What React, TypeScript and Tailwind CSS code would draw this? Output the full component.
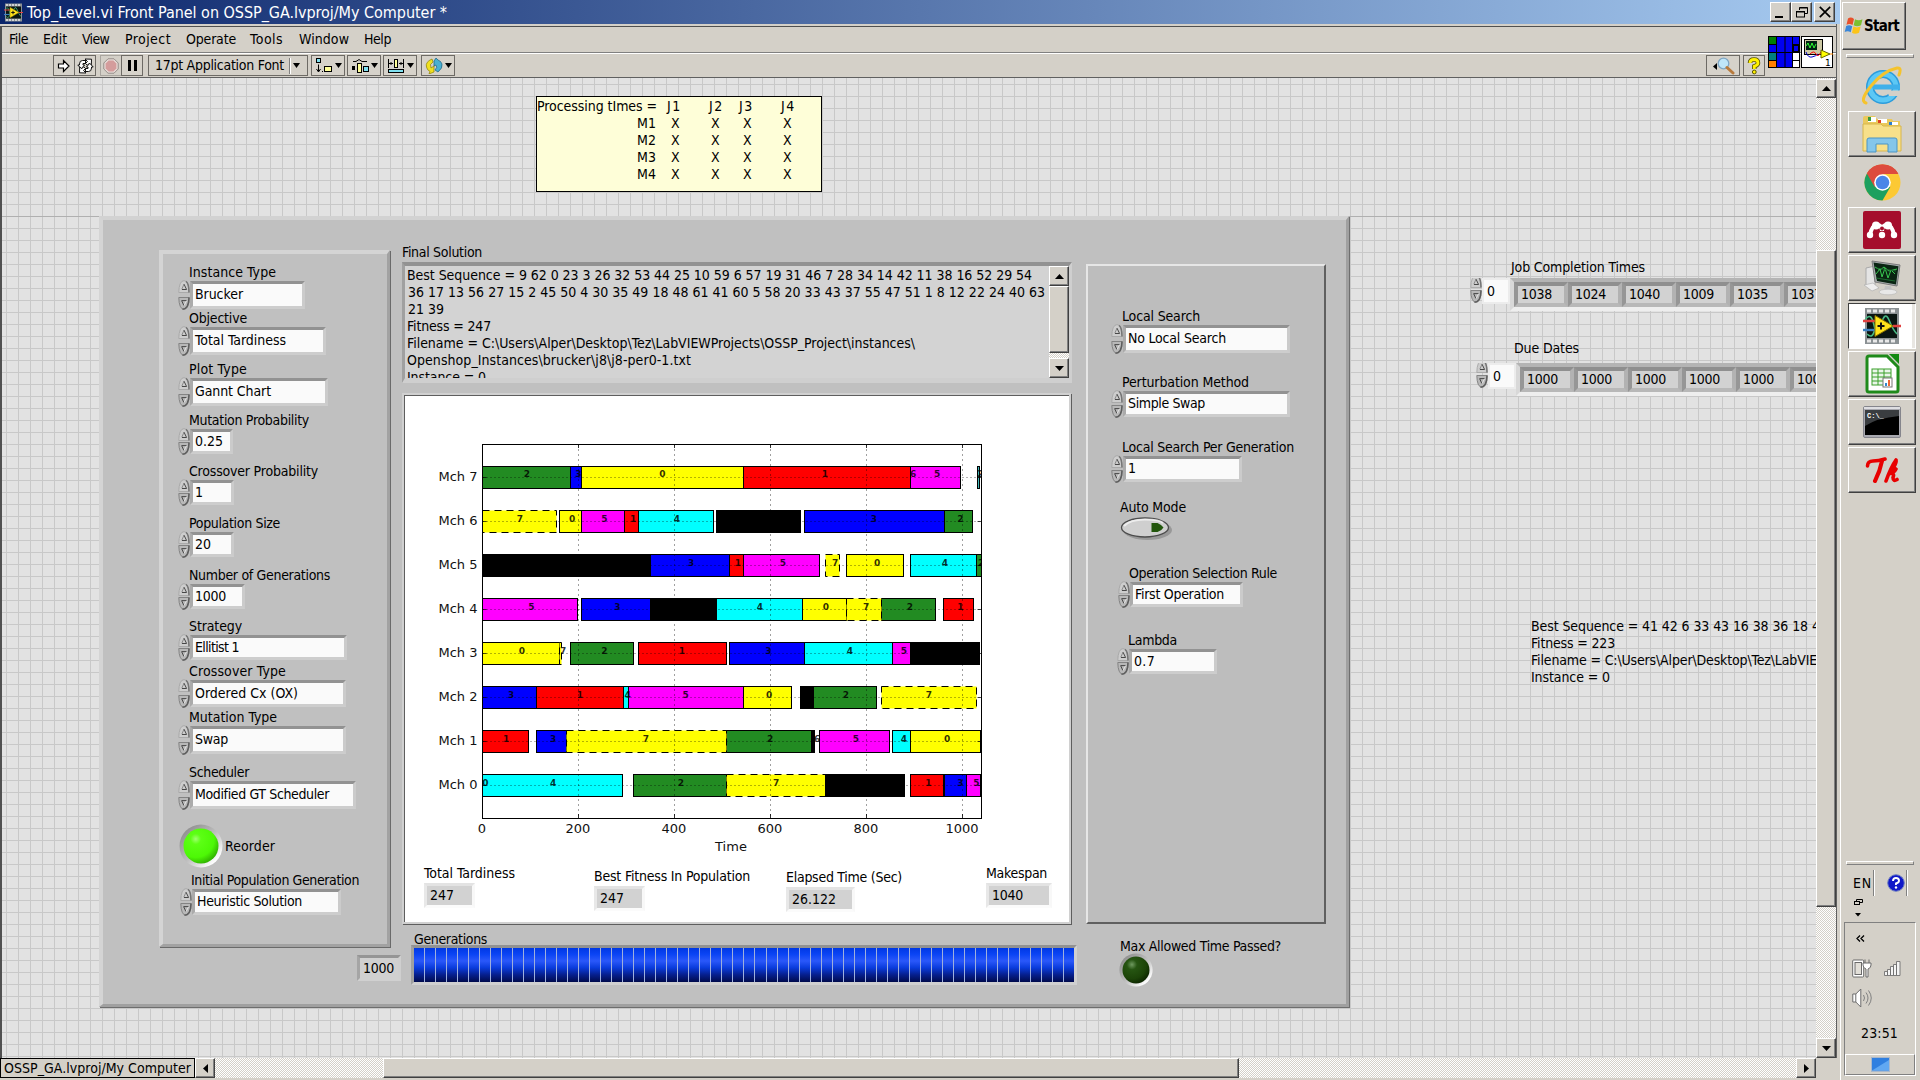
import React, { useLayoutEffect, useRef } from "react";

/* Text whose tracking is adjusted so that the run is exactly `w` pixels wide. */
function T({ w, children, className = "" }: { w?: number; children: string; className?: string }) {
  const ref = useRef<HTMLSpanElement>(null);
  useLayoutEffect(() => {
    const el = ref.current;
    if (!el || !w) return;
    el.style.letterSpacing = "0px";
    const natural = el.getBoundingClientRect().width;
    el.style.letterSpacing = `${(w - natural) / children.length}px`;
  }, [w, children]);
  return (
    <span ref={ref} className={`inline-block shrink-0 whitespace-pre ${className}`}>
      {children}
    </span>
  );
}

const RAISED = "border border-t-white border-l-white border-r-[#404040] border-b-[#404040] shadow-[inset_-1px_-1px_0_#808080] bg-[#d4d0c8]";
const DITHER = "bg-[conic-gradient(#ffffff_25%,#d4d0c8_0_50%,#ffffff_0_75%,#d4d0c8_0)] bg-[length:2px_2px]";

function Arrow({ dir }: { dir: "up" | "down" | "left" | "right" }) {
  const pts = {
    up: "0,5 4.5,0 9,5",
    down: "0,0 4.5,5 9,0",
    left: "5,0 0,4.5 5,9",
    right: "0,0 5,4.5 0,9",
  }[dir];
  const v = dir === "up" || dir === "down";
  return (
    <svg width={v ? 9 : 5} height={v ? 5 : 9} className="shrink-0">
      <polygon points={pts} fill="#000" />
    </svg>
  );
}

function ScrollButton({ dir, className = "" }: { dir: "up" | "down" | "left" | "right"; className?: string }) {
  return (
    <div className={`flex shrink-0 items-center justify-center ${RAISED} ${className}`}>
      <Arrow dir={dir} />
    </div>
  );
}

function Spinner({ tight = false }: { tight?: boolean }) {
  return (
    <div className={`flex w-[12px] shrink-0 flex-col justify-between ${tight ? "" : "-my-px"}`}>
      <svg width="12" height="13" viewBox="0 0 12 13">
        <path d="M.8 12.500 Q1 1 6 .6 Q11 1 11.200 12.500Z" fill="#cdcdcd" stroke="#a2a2a2" strokeWidth=".8" />
        <path d="M11 12.500 Q10.800 3 8 1.400" fill="none" stroke="#757575" strokeWidth="1.500" />
        <path d="M3.800 9.200 L6 4.200" stroke="#8a8a8a" fill="none" />
        <path d="M6 4.200 L8.600 9.500 H4" stroke="#484848" fill="none" />
      </svg>
      <svg width="12" height="13" viewBox="0 0 12 13">
        <path d="M.8 .5 Q1 12 6 12.400 Q11 12 11.200 .5Z" fill="#b8b8b8" stroke="#7d7d7d" strokeWidth=".9" />
        <path d="M11 .5 Q10.800 12 4.500 12.200" fill="none" stroke="#5d5d5d" strokeWidth="1.500" />
        <path d="M3.400 3.600 H8.400 M3.800 4 L6 8.800" stroke="#484848" fill="none" />
        <path d="M6 8.800 L8.400 4" stroke="#e4e4e4" fill="none" />
      </svg>
    </div>
  );
}

type Ctl = { label: string; lw: number; value: string; vw: number; cls: string; size: string };

function Control({ label, lw, value, vw, cls, size }: Ctl) {
  return (
    <div className={cls}>
      <div className="ml-[11px] h-[18px] leading-[18px]">
        <T w={lw}>{label}</T>
      </div>
      <div className="flex">
        <Spinner />
        <div className={`box-content flex items-center border-[3px] border-t-[#929292] border-r-[#cbcbcb] border-b-[#cdcdcd] border-l-[#ababab] bg-[#fafafa] pb-px ${size}`}>
          <T w={vw} className="ml-[2px] leading-[17px]">{value}</T>
        </div>
      </div>
    </div>
  );
}

const LEFT_CONTROLS: Ctl[] = [
  { label: "Instance Type", lw: 87, value: "Brucker", vw: 48, cls: "mt-[9px]", size: "w-[109px] h-[21px]" },
  { label: "Objective", lw: 58, value: "Total Tardiness", vw: 91, cls: "", size: "w-[130px] h-[21px]" },
  { label: "Plot Type", lw: 58, value: "Gannt Chart", vw: 76, cls: "mt-[5px]", size: "w-[132px] h-[21px]" },
  { label: "Mutation Probability", lw: 120, value: "0.25", vw: 28, cls: "mt-[5px]", size: "w-[37px] h-[18px]" },
  { label: "Crossover Probability", lw: 129, value: "1", vw: 8, cls: "mt-[8px]", size: "w-[38px] h-[18px]" },
  { label: "Population Size", lw: 91, value: "20", vw: 16, cls: "mt-[9px]", size: "w-[38px] h-[18px]" },
  { label: "Number of Generations", lw: 141, value: "1000", vw: 31, cls: "mt-[9px]", size: "w-[49px] h-[18px]" },
  { label: "Strategy", lw: 53, value: "Ellitist 1", vw: 44, cls: "mt-[8px]", size: "w-[151px] h-[18px]" },
  { label: "Crossover Type", lw: 97, value: "Ordered Cx (OX)", vw: 103, cls: "mt-[2px]", size: "w-[150px] h-[20px]" },
  { label: "Mutation Type", lw: 88, value: "Swap", vw: 33, cls: "mt-px", size: "w-[150px] h-[21px]" },
  { label: "Scheduler", lw: 60, value: "Modified GT Scheduler", vw: 134, cls: "mt-[9px]", size: "w-[160px] h-[21px]" },
];

const RIGHT_CONTROLS: Ctl[] = [
  { label: "Local Search", lw: 78, value: "No Local Search", vw: 98, cls: "mt-[41px]", size: "w-[161px] h-[21px]" },
  { label: "Perturbation Method", lw: 127, value: "Simple Swap", vw: 77, cls: "mt-[20px]", size: "w-[161px] h-[19px]" },
  { label: "Local Search Per Generation", lw: 172, value: "1", vw: 8, cls: "mt-[21px]", size: "w-[113px] h-[19px]" },
];

const COLORS: Record<string, string> = {
  g: "#228b22", b: "#0000ff", y: "#ffff00", r: "#ff0000", m: "#ff00ff", c: "#00ffff", k: "#000000", t: "#40b8b8", d: "#ffff00",
};

/* [colour, start, end, text, text centre]; "d" is drawn with a dashed outline */
type Bar = [string, number, number, string?, number?];
const ROWS: Bar[][] = [
  [["c", 0, 291.7, "4", 147], ["g", 314, 508.7, "2", 413.5], ["d", 508.7, 715, "7", 611.5], ["k", 715, 879.5], ["r", 891, 961, "1", 929], ["b", 962, 1008, "3", 995.5], ["m", 1008, 1038, "5", 1029], ["", 0, 0, "0", 6]],
  [["r", 0, 96, "1", 49], ["b", 112, 174.6, "3", 147], ["g", 508.7, 685.8, "2", 599], ["d", 174.6, 508.7, "7", 340.6], ["k", 688.5, 692, "6", 697], ["m", 701.7, 848, "5", 778], ["c", 854, 891, "4", 878], ["y", 891, 1038, "0", 968]],
  [["b", 0, 112, "3", 59.4], ["r", 112, 293.4, "1", 203], ["m", 304, 543, "5", 423], ["c", 293.4, 304, "4", 302.4], ["y", 543, 644, "0", 597], ["k", 662, 689], ["g", 689, 821, "2", 757], ["d", 831, 1029.5, "7", 930]],
  [["y", 0, 160, "0", 82], ["d", 160, 165, "7", 168], ["g", 183, 315, "2", 254], ["r", 325, 508.7, "1", 415.6], ["b", 514, 670.5, "3", 595.5], ["c", 670.5, 854, "4", 765.6], ["m", 854, 891, "5", 878], ["k", 891, 1036]],
  [["m", 0, 198.6, "5", 101.7], ["b", 205.6, 349.7, "3", 281], ["k", 350, 487], ["c", 488, 667, "4", 578], ["y", 667, 758, "0", 715.6], ["g", 831, 944, "2", 890.6], ["d", 758, 831, "7", 799], ["r", 960, 1023, "1", 995.5]],
  [["k", 0, 350], ["b", 350, 514.6, "3", 434.4], ["r", 514.6, 543, "1", 532.3], ["m", 543, 702.4, "5", 626], ["d", 714, 744, "7", 734.4], ["y", 758, 877.4, "0", 822], ["c", 891, 1030, "4", 963.5], ["g", 1030, 1044, "2", 1039]],
  [["d", 0, 154.5, "7", 78], ["y", 160, 206.6, "0", 186.5], ["m", 206.6, 296.5, "5", 254], ["r", 296.5, 325, "1", 314], ["c", 325, 482, "4", 405], ["k", 486.5, 662.5], ["b", 670.5, 962, "3", 815.6], ["g", 962, 1021, "2", 995.5]],
  [["g", 0, 183, "2", 92.7], ["b", 183, 206.6, "3", 200], ["y", 206.6, 543.4, "0", 374.7], ["r", 543.4, 891.3, "1", 713.5], ["m", 891.3, 995.5, "5", 947], ["t", 1030.500, 1035.8, "2", 1037], ["", 0, 0, "6", 897]],
];

const X0 = 77.5;
const px = (t: number) => X0 + t * 0.48;
const snap = (t: number) => Math.round(px(t) - 0.5) + 0.5;
const rowY = (i: number) => 389.5 - i * 44;

function Gantt() {
  return (
    <svg width="664" height="468" className="shrink-0" fontFamily='"DejaVu Sans", sans-serif'>
      <clipPath id="axes">
        <rect x={X0 - 0.5} y="48" width="500" height="375" />
      </clipPath>
      <g clipPath="url(#axes)">
        {ROWS.map((row, i) =>
          row.map((b, j) =>
            b[0] ? (
              <rect
                key={`${i}-${j}`}
                x={snap(b[1])}
                y={rowY(i) - 11}
                width={Math.max(1, snap(b[2]) - snap(b[1]))}
                height="22"
                fill={COLORS[b[0]]}
                stroke="#000"
                strokeWidth="1"
                strokeDasharray={b[0] === "d" ? "7 5" : undefined}
              />
            ) : null
          )
        )}
        {[200, 400, 600, 800, 1000].map((t) => (
          <g key={t} stroke="#000">
            <line x1={px(t)} x2={px(t)} y1="48.5" y2="422" strokeDasharray="1 4" strokeOpacity=".75" />
            <path d={`M${px(t)} 48v4M${px(t)} 422v-4`} strokeOpacity=".8" />
          </g>
        ))}
        {ROWS.map((_, i) => (
          <g key={i} stroke="#000">
            <line x1={X0} x2="576.5" y1={rowY(i)} y2={rowY(i)} strokeDasharray="1 3" strokeOpacity=".6" />
            <path d={`M${X0} ${rowY(i)}h4M576.5 ${rowY(i)}h-4`} strokeOpacity=".7" />
          </g>
        ))}
        {ROWS.map((row, i) =>
          row.map((b, j) =>
            b[3] ? (
              <text key={`${i}-${j}`} x={px(b[4]!)} y={rowY(i) + (i === 7 ? -0.5 : 0.5)} textAnchor="middle" fontSize="9" fontWeight="bold" fillOpacity=".82">
                {b[3]}
              </text>
            ) : null
          )
        )}
      </g>
      <rect x={X0} y="48.5" width="499" height="374" fill="none" stroke="#000" />
      <g fontSize="13" fill="#111">
        {ROWS.map((_, i) => (
          <text key={i} x="72.5" y={rowY(i) + 3.5} textAnchor="end">{`Mch ${i}`}</text>
        ))}
        {[0, 200, 400, 600, 800, 1000].map((t) => (
          <text key={t} x={px(t) - 0.5} y="437" textAnchor="middle">{t}</text>
        ))}
        <text x="326" y="455" textAnchor="middle">Time</text>
      </g>
    </svg>
  );
}

function Readout({ label, lw, value, vw, cls, size }: Ctl) {
  return (
    <div className={cls}>
      <div className="h-[19px] leading-[18px]">
        <T w={lw}>{label}</T>
      </div>
      <div className={`box-content flex items-center border-[3px] border-t-[#e3e3e3] border-r-[#f8f8f8] border-b-[#fbfbfb] border-l-[#e8e8e8] bg-[#d2d2d2] pl-[3px] ${size}`}>
        <T w={vw} className="leading-[17px]">{value}</T>
      </div>
    </div>
  );
}

function Led({ on }: { on: boolean }) {
  const s = on ? 44 : 34;
  const id = on ? "ledOn" : "ledOff";
  return (
    <svg width={s} height={s} viewBox="0 0 44 44" className="shrink-0">
      <defs>
        <linearGradient id={`${id}r`} x1="0" y1="0" x2="1" y2="1">
          <stop offset=".1" stopColor="#8c8c8c" />
          <stop offset=".5" stopColor="#bdbdbd" />
          <stop offset=".85" stopColor="#ffffff" />
        </linearGradient>
        <radialGradient id={id} cx=".35" cy=".3" r=".75">
          {on ? (
            <>
              <stop offset="0" stopColor="#a0ff70" />
              <stop offset=".2" stopColor="#5cff14" />
              <stop offset=".7" stopColor="#4df806" />
              <stop offset="1" stopColor="#2fae00" />
            </>
          ) : (
            <>
              <stop offset="0" stopColor="#6f9a60" />
              <stop offset=".25" stopColor="#265512" />
              <stop offset=".7" stopColor="#1c4408" />
              <stop offset="1" stopColor="#0c2400" />
            </>
          )}
        </radialGradient>
      </defs>
      <circle cx="22" cy="22" r="21.5" fill={`url(#${id}r)`} />
      <circle cx="22" cy="22" r="17.5" fill={`url(#${id})`} />
    </svg>
  );
}

function ArrayControl({ cells, cls }: { cells: string[]; cls: string }) {
  return (
    <div className={`flex overflow-hidden ${cls}`}>
      <div className="flex h-[28px] -translate-y-[5px]">
        <Spinner tight />
      </div>
      <div className="mr-[2px] ml-[2px] h-[22px] w-[24px] shrink-0 bg-[#fafafa] pt-[3px] pl-[3px] shadow-[0_0_0_2px_#ececec]">
        <T w={8} className="leading-[17px]">0</T>
      </div>
      <div className="-mt-[2px] flex h-[33px] shrink-0 border-t-4 border-b-4 border-l-[4px] border-t-[#b4b4b4] border-b-[#eeeeee] border-l-[#d8d8d8]">
        {cells.map((c, i) => (
          <div key={i} className="box-border flex h-[25px] w-[54px] items-center border-[4px] border-t-[#8f8f8f] border-r-[#b2b2b2] border-b-[#b8b8b8] border-l-[#969696] bg-[#d2d2d2] pl-[3px]">
            <T w={31} className="leading-[17px]">{c}</T>
          </div>
        ))}
      </div>
    </div>
  );
}

const MENU: [string, number, string][] = [
  ["File", 19, ""], ["Edit", 24, "ml-[15px]"], ["View", 27, "ml-[15px]"], ["Project", 46, "ml-[16px]"],
  ["Operate", 50, "ml-[15px]"], ["Tools", 33, "ml-[14px]"], ["Window", 50, "ml-[16px]"], ["Help", 27, "ml-[15px]"],
];

const TOOL = "flex h-[21px] shrink-0 items-center justify-center border border-[#6d6a65] bg-[#d6d2ca]";

function ToolBar() {
  return (
    <div className="flex h-[23px] items-center pl-[51px]">
      <div className={`${TOOL} w-[22px]`}>
        <svg width="14" height="14" viewBox="0 0 14 14"><path d="M1.5 5h5V1.500L12 7l-5.500 5.500V9h-5z" fill="#fff" stroke="#000" strokeWidth="1.200" /></svg>
      </div>
      <div className={`${TOOL} -ml-px w-[22px]`}>
        <svg width="17" height="16" viewBox="0 0 17 16" fill="#fff" stroke="#111" strokeWidth="1">
          <path d="M6 5.500h3.500L8 4l1.500-1.500h-4Q2.500 2.500 2.500 6v1H.8l3.400 3.700L7.600 7H6z" />
          <path d="M8 1l6.500.2-.2 6-2-2-2 2L8.500 5.500l2-2z" />
          <path d="M11 10.500H7.500L9 12l-1.500 1.500h4q3 0 3-3.500V9h1.700l-3.400-3.700L9.400 9H11z" />
          <path d="M9 15l-6.500-.2.200-6 2 2 2-2 1.800 1.700-2 2z" />
        </svg>
      </div>
      <div className="ml-[4px] flex h-[21px] w-[22px] shrink-0 items-center justify-center border border-[#a9a59f]">
        <svg width="16" height="16" viewBox="0 0 16 16"><path d="M5 .8h6L15.200 5v6L11 15.200H5L.8 11V5z" fill="#e8dcd8" stroke="#948c88" /><path d="M5.600 2.500h4.800l3 3v5l-3 3H5.600l-3-3v-5z" fill="#d49c9c" /></svg>
      </div>
      <div className={`${TOOL} -ml-px w-[22px]`}>
        <svg width="9" height="11"><path d="M0 0h3v11H0zM6 0h3v11H6z" /></svg>
      </div>
      <div className="ml-[5px] flex h-[21px] w-[160px] shrink-0 items-center border border-[#6d6a65] pl-[6px]">
        <T w={129}>17pt Application Font</T>
        <div className="ml-[5px] h-[16px] w-[2px] border-l border-[#808080] bg-white" />
        <svg width="7" height="5" className="ml-[2px]"><path d="M0 0h7L3.500 5z" /></svg>
      </div>
      {[0, 1, 2, 3].map((i) => (
        <div key={i} className={`${TOOL} w-[34px] ${i === 0 ? "ml-[3px]" : i === 3 ? "ml-[4px]" : "ml-[2px]"}`}>
          <svg width="18" height="16" viewBox="0 0 18 16">
            {i === 0 && <g stroke="#000"><rect x="1.500" y=".5" width="4" height="4" fill="#7fe0f0" /><path d="M3.500 6.500v7M1.500 11l2 3 2-3M7 13.500h1" fill="none" /><rect x="9.500" y="8.500" width="7" height="5" fill="#ffff99" /></g>}
            {i === 1 && <g stroke="#000"><path d="M2 3.500h3l3-2 3 2h5" fill="none" /><rect x="1.500" y="8.500" width="2" height="3" fill="#000" /><rect x="6.500" y="5.500" width="4" height="9" fill="#ffff99" /><rect x="12.500" y="8.500" width="5" height="5" fill="#7fe0f0" /></g>}
            {i === 2 && <g stroke="#000"><path d="M1.500 1v9M16.500 1v9M2 5.500h4M12 5.500h4M4 4v3M14 4v3" fill="none" /><rect x="7.500" y="1.500" width="3" height="8" fill="#ffff99" /><rect x="1.500" y="11.500" width="15" height="3" fill="#7fe0f0" /></g>}
            {i === 3 && <g><path d="M7 1Q0 4 1.500 9 2 12 5 13.500L4 16l5-2V8L6 10Q4 6 8 4z" fill="#f0e020" stroke="#8a8000" strokeWidth=".7" /><path d="M11 0 9 3v5l2-1q2 2-1 5l3 2q5-4 4-8Q16 3 13 2z" fill="#4ab0d0" stroke="#155e80" strokeWidth=".7" /></g>}
          </svg>
          <svg width="7" height="5" className="ml-[2px]"><path d="M0 0h7L3.500 5z" /></svg>
        </div>
      ))}
      <div className={`${TOOL} ml-auto w-[34px]`}>
        <svg width="23" height="18" viewBox="0 0 23 18"><path d="M5 6v7L1 9.500z" /><circle cx="11.500" cy="6.500" r="5.300" fill="#bfe6fa" stroke="#7fa6c4" strokeWidth="1.300" /><path d="M15 10.500l6 5.500" stroke="#b87a3c" strokeWidth="3" strokeLinecap="round" /></svg>
      </div>
      <div className={`${TOOL} mr-[71px] ml-[3px] w-[22px]`}>
        <svg width="14" height="18" viewBox="0 0 14 18"><path d="M3 6Q3 2.500 7 2.500T11 6Q11 8 7.300 9.300V12" fill="none" stroke="#5a5500" strokeWidth="4.500" /><path d="M3 6Q3 2.500 7 2.500T11 6Q11 8 7.300 9.300V12" fill="none" stroke="#fff200" strokeWidth="2.800" /><circle cx="7.300" cy="15" r="1.900" fill="#fff200" stroke="#5a5500" /></svg>
      </div>
    </div>
  );
}

function ConnectorPane() {
  return (
    <svg width="66" height="33" viewBox="0 0 66 33">
      <rect width="32" height="32" fill="#000" />
      <g fill="#0000f0">
        <path d="M9 1h7.500v15H9zM17.500 1H24v15h-6.500zM9 17h7.500v14H9zM17.500 17H24v14h-6.500zM25 1h6v7h-6zM1 9h7v7H1z" />
        <path d="M26 10h4v5h-4z" />
      </g>
      <path d="M1 1h7v7H1z" fill="#008000" /><path d="M1 17h7v7H1z" fill="#008080" /><path d="M1 25h7v6H1z" fill="#ff8000" />
      <path d="M25 17h6v7h-6zM25 25h6v6h-6z" fill="#fff" />
      <rect x="33.500" y=".5" width="31" height="31" fill="#fff" stroke="#000" />
      <rect x="36.500" y="3.500" width="18" height="15" fill="#cdc9a5" stroke="#000" />
      <rect x="38" y="5" width="11" height="9" fill="#021" /><path d="M38 10l2-3 2 5 2-5 2 5 2-4" stroke="#3f3" fill="none" />
      <path d="M38 16q2 6 6 5t6-3" stroke="#00c" fill="none" /><path d="M42 18q4-4 6 0t5-2" stroke="#f00" fill="none" />
      <path d="M53 14l9 4-9 4z" fill="#ff0" stroke="#660" /><path d="M62 18h3" stroke="#f80" />
      <text x="57" y="29.500" fontSize="9" fontFamily='"DejaVu Sans", sans-serif'>1</text>
    </svg>
  );
}

function LvIcon({ size }: { size: number }) {
  return (
    <svg width={size} height={size} viewBox="0 0 38 36" className="shrink-0">
      <rect x="2" y="0" width="34" height="36" fill="#8b9194" />
      <g fill="#e8e8e8">{[4, 10, 16, 22, 28].map((x) => <path key={x} d={`M${x} 1.500h4v3h-4zM${x} 31.500h4v3h-4z`} />)}</g>
      <rect x="4" y="6" width="30" height="24" fill="#0a1512" />
      <path d="M2 12q6-9 9 5t7 0q4-15 8-5t8 14M4 26q6 6 8-6" stroke="#48b884" strokeWidth="1.600" fill="none" />
      <path d="M0 13h12M30 18h8" stroke="#e04040" strokeWidth="2.400" /><path d="M0 22h12" stroke="#3a7fc0" strokeWidth="2.400" />
      <path d="M12 7.500v21L30 18z" fill="#ffe21c" stroke="#8a7400" /><path d="M18 14.500v7M14.500 18h7" stroke="#111" strokeWidth="2" />
    </svg>
  );
}

function WinFlag({ size }: { size: number }) {
  return (
    <svg width={size} height={size} viewBox="0 0 20 20" className="shrink-0">
      <path d="M4 2.500Q7 .5 10 3L8.500 9Q5.500 7 2.500 8.800z" fill="#e8502a" />
      <path d="M11 3.300q3.500 2 7.500 0L17 9.300q-4 1.700-7.300 0z" fill="#7cc030" />
      <path d="M2.200 10q3-1.800 6 .2L6.700 16.300q-3-2-6-.2z" fill="#3a86d8" />
      <path d="M9.400 10.600q3.500 1.600 7.300 0L15 16.800q-4 1.700-7 0z" fill="#fcc419" />
    </svg>
  );
}

const TASK_ICONS: { framed: string; icon: React.ReactNode }[] = [
  {
    framed: "",
    icon: (
      <svg width="40" height="40" viewBox="0 0 40 40">
        <circle cx="21" cy="21" r="13" fill="none" stroke="#2b9cdc" strokeWidth="8" />
        <circle cx="21" cy="21" r="13" fill="none" stroke="#5cc8f5" strokeWidth="5" />
        <path d="M11 21h27" stroke="#3fb0ea" strokeWidth="5" /><path d="M25 24.500h15v5.500H27z" fill="#d4d0c8" />
        <path d="M4 37Q-3 35 9 20T35 2q5-1 2 7" fill="none" stroke="#f5c32c" strokeWidth="3" strokeLinecap="round" />
      </svg>
    ),
  },
  {
    framed: "up",
    icon: (
      <svg width="40" height="38" viewBox="0 0 40 38">
        <path d="M1 7V3q0-2 2-2h10l2 3h15l1 2h7v30H1z" fill="#eac95c" />
        <path d="M6 2h8v5H6z" fill="#fff" /><path d="M6 2h3v4H6z" fill="#3a9a3a" /><path d="M16 4h9v4h-9z" fill="#fff" /><path d="M16 5h3v3h-3z" fill="#e04020" /><path d="M27 7h9v3h-9z" fill="#fff" /><path d="M27 7h3v3h-3z" fill="#2a7fd0" />
        <path d="M1 9h18l2 2h18v25H1z" fill="#f7e08a" stroke="#d8b64a" />
        <path d="M5 37V25q0-2 2-2h26q2 0 2 2v12H26v-8H14v8z" fill="#84c6ea" stroke="#4a94c4" />
      </svg>
    ),
  },
  {
    framed: "",
    icon: (
      <svg width="37" height="37" viewBox="0 0 37 37">
        <circle cx="18.500" cy="18.500" r="18" fill="#fcc934" />
        <path d="M18.500 18.500L2.900 9.500A18 18 0 0 1 34.100 9.500H18.500z" fill="#dd4b3e" />
        <path d="M18.500 18.500L2.900 9.500A18 18 0 0 0 18.500 36.500l7.800-13.500z" fill="#1da05f" />
        <path d="M2.900 9.500l7.800 13.500L18.500 10h15.900A18 18 0 0 0 2.900 9.500z" fill="#dd4b3e" />
        <circle cx="18.500" cy="18.500" r="8.300" fill="#fff" /><circle cx="18.500" cy="18.500" r="6.800" fill="#4a86e8" />
      </svg>
    ),
  },
  {
    framed: "up",
    icon: (
      <svg width="38" height="38" viewBox="0 0 38 38">
        <rect width="38" height="38" rx="2" fill="#a50e2c" />
        <path d="M7 24q2-10 7-10t5 6q0-6 5-6t7 10" fill="none" stroke="#fff" strokeWidth="4" />
        <circle cx="7" cy="24" r="3.200" fill="#fff" /><circle cx="19" cy="24" r="3.200" fill="#fff" /><circle cx="31" cy="24" r="3.200" fill="#fff" /><circle cx="13" cy="14.500" r="4" fill="#fff" /><circle cx="25" cy="14.500" r="4" fill="#fff" />
        <circle cx="19" cy="17.500" r="2" fill="#a50e2c" />
      </svg>
    ),
  },
  {
    framed: "up",
    icon: (
      <svg width="38" height="36" viewBox="0 0 38 36">
        <path d="M3 8l9-2v22l-9-2z" fill="#e4e4e4" stroke="#aaa" /><path d="M1 25l9-2 6 5-7 3z" fill="#eee" stroke="#aaa" strokeWidth=".6" />
        <path d="M9 1l28 4-3 21-22-4z" fill="#a9adaf" stroke="#7a7a7a" /><path d="M10.500 2.500l25 3.700L33 24.500l-19-3.500z" fill="#0a2412" />
        <path d="M13 14l4-5 2 8 3-9 3 10 3-8 4 4M12 7l5 3 4-3 5 4 8-2" stroke="#38c850" fill="none" /><path d="M13 8l20 3M13 18l19 3" stroke="#1f6a30" />
        <path d="M22 26h6l1 5h-8z" fill="#c2c2c2" /><ellipse cx="25" cy="32" rx="9" ry="2.800" fill="#e8e8e8" stroke="#b5b5b5" strokeWidth=".6" />
      </svg>
    ),
  },
  { framed: "down", icon: <LvIcon size={38} /> },
  {
    framed: "up",
    icon: (
      <svg width="35" height="40" viewBox="0 0 35 40">
        <path d="M4 2h18l11 11v23q0 2-2 2H4q-2 0-2-2V4q0-2 2-2z" fill="#fff" stroke="#1f8a1a" strokeWidth="3" />
        <path d="M24 0h10v10z" fill="#128a10" />
        <rect x="7" y="15" width="19" height="16" fill="#eaf6ea" stroke="#3aa02a" /><path d="M7 19h19M7 23h19M7 27h19M13 15v16M19 15v16" stroke="#3aa02a" />
        <rect x="18" y="24" width="9" height="9" fill="#fff" stroke="#777" /><path d="M20 29h2v3h-2z" fill="#38c" /><path d="M23 26h2v6h-2z" fill="#e63" />
      </svg>
    ),
  },
  {
    framed: "up",
    icon: (
      <svg width="38" height="32" viewBox="0 0 38 32">
        <rect x=".5" y=".5" width="37" height="31" rx="1.500" fill="#a9a9b0" stroke="#85858c" /><path d="M1 1h36v2H1z" fill="#dedee2" />
        <rect x="2" y="4" width="34" height="25" fill="#000" /><path d="M2 4h34v6Q14 12 2 20z" fill="#3a3d40" />
        <text x="4" y="11.500" fontSize="7" fill="#fff" fontWeight="bold" fontFamily='"Liberation Mono", monospace'>C:\_</text>
      </svg>
    ),
  },
  {
    framed: "up",
    icon: (
      <svg width="34" height="26" viewBox="0 0 34 26" fill="none" stroke="#e80000" strokeLinecap="round" strokeLinejoin="round">
        <path d="M2.500 9Q2.500 4 8 4T20 2" strokeWidth="3.600" />
        <path d="M17 4Q15 14 10 24" strokeWidth="4" />
        <path d="M31 3Q26 10 21 24M31 3.500q1 3-5 10M31 12q-2 4-6 4.500 5-.5 3 4 0 4.500 4 2" strokeWidth="3.600" />
      </svg>
    ),
  },
];

function TaskBar() {
  return (
    <div className="flex w-[80px] shrink-0 flex-col border-l border-white bg-[#d4d0c8] pl-px">
      <div className={`mt-[2px] flex h-[48px] w-[64px] shrink-0 items-center pl-px ${RAISED}`}>
        <WinFlag size={20} />
        <T w={35} className="text-[15px] font-bold">Start</T>
      </div>
      <div className="mt-[4px] ml-[4px] h-[4px] w-[68px] shrink-0 border border-t-white border-r-[#808080] border-b-[#808080] border-l-white" />
      <div className="ml-[6px] flex flex-col gap-[2px] pt-[5px]">
        {TASK_ICONS.map((t, i) => (
          <div
            key={i}
            className={
              "flex h-[46px] w-[68px] shrink-0 items-center justify-center " +
              (t.framed === "up" ? RAISED : t.framed === "down" ? "border border-t-[#404040] border-r-white border-b-white border-l-[#404040] bg-white shadow-[inset_-3px_0_0_#e8e6e2]" : "")
            }
          >
            {t.icon}
          </div>
        ))}
      </div>
      <div className="mt-auto ml-[4px] h-[4px] w-[68px] shrink-0 border border-t-white border-r-[#808080] border-b-[#808080] border-l-white" />
      <div className="mt-[5px] flex h-[26px] items-center pl-[11px]">
        <T w={19}>EN</T>
        <div className="ml-px h-full w-[2px] border-l border-[#808080] bg-white" />
        <svg width="18" height="18" viewBox="0 0 18 18" className="ml-[12px]">
          <circle cx="9" cy="9" r="8.300" fill="#1018c8" stroke="#7080c0" />
          <path d="M6 7q0-3 3-3t3 2.700Q12 8.500 9 9.500V11" fill="none" stroke="#fff" strokeWidth="1.900" /><circle cx="9" cy="13.500" r="1.200" fill="#fff" />
        </svg>
        <div className="ml-px h-full w-[2px] border-l border-[#808080] bg-white" />
      </div>
      <div className="mt-[3px] ml-[12px] flex h-[22px] flex-col">
        <svg width="9" height="7" viewBox="0 0 9 7" fill="none" stroke="#000"><path d="M2.500 2V.5h6v3H6" /><rect x=".5" y="2.500" width="5" height="3" /></svg>
        <svg width="6" height="4" className="mt-[7px] ml-px"><path d="M0 0h6L3 3.500z" /></svg>
      </div>
      <div className="mt-px mb-[4px] ml-[2px] flex h-[154px] w-[72px] shrink-0 flex-col border border-t-[#808080] border-r-white border-b-white border-l-[#808080]">
        <svg width="9" height="7" viewBox="0 0 9 7" className="mt-[12px] ml-[11px]" fill="none" stroke="#000" strokeWidth="1.300"><path d="M4 .5l-3 3 3 3M8 .5l-3 3 3 3" /></svg>
        <div className="mt-[16px] ml-[7px] flex items-center gap-[12px]">
          <svg width="20" height="20" viewBox="0 0 20 20" fill="#fff" stroke="#6b6b6b"><rect x=".7" y="2" width="11" height="17" rx="1" /><rect x="3" y="4.500" width="6.500" height="12" fill="#e2dfd8" /><path d="M11 5h8v2q0 3-3 4v8h-2v-8q-3-1-3-4zM13 5V1.500M17 5V1.500" /></svg>
          <svg width="17" height="15" viewBox="0 0 17 15" fill="#f4f4f4" stroke="#707070" strokeWidth=".9"><path d="M.5 10.500h3v4h-3zM3.500 8.500h3v6h-3zM6.500 5.500h3v9h-3zM9.500 3.500h3v11h-3zM12.500.5h3.500v14h-3.500z" /></svg>
        </div>
        <svg width="21" height="20" viewBox="0 0 21 20" className="mt-[10px] ml-[7px]" fill="none" stroke="#808080"><path d="M.8 6h3l5-5v18l-5-5h-3zM3.800 6v8" fill="#fff" stroke="#6b6b6b" /><path d="M11.500 7q2 3 0 6M14 4.500q4 5.500 0 11M16.500 2.500q5.500 7.500 0 15" /></svg>
        <div className="mt-[17px] ml-[16px] h-[17px]"><T w={37}>23:51</T></div>
        <div className="mt-auto flex h-[21px] shrink-0 items-center justify-center border border-t-white border-r-[#808080] border-b-[#808080] border-l-white">
          <svg width="19" height="15" viewBox="0 0 19 15"><rect width="19" height="15" fill="#a8b8cc" /><rect x="1" y="1" width="17" height="12.500" fill="#2f7fe0" /><path d="M1 13.500L18 3v10.500z" fill="#61a8f2" /></svg>
        </div>
      </div>
    </div>
  );
}

function MatrixNote() {
  return (
    <div className="absolute top-[18px] left-[534px] h-[96px] w-[286px] border border-black bg-[#fefed8] leading-[17px]">
      <div className="mt-px grid grid-cols-[118px_42px_30px_42px_1fr]">
        <T w={117}>Processing tImes =</T>
        {["J1", "J2", "J3", "J4"].map((j) => (
          <div key={j} className="pl-[12px]"><T w={15}>{j}</T></div>
        ))}
        {["M1", "M2", "M3", "M4"].map((m) => (
          <React.Fragment key={m}>
            <div className="pl-[100px]"><T w={19}>{m}</T></div>
            {[0, 1, 2, 3].map((i) => (
              <div key={i} className={i === 0 ? "pl-[16px]" : i === 1 ? "pl-[14px]" : i === 2 ? "pl-[16px]" : "pl-[14px]"}><T w={9}>X</T></div>
            ))}
          </React.Fragment>
        ))}
      </div>
    </div>
  );
}

const SOLUTION: [string, number, string][] = [
  ["Best Sequence = 9 62 0 23 3 26 32 53 44 25 10 59 6 57 19 31 46 7 28 34 14 42 11 38 16 52 29 54", 625, ""],
  ["36 17 13 56 27 15 2 45 50 4 30 35 49 18 48 61 41 60 5 58 20 33 43 37 55 47 51 1 8 12 22 24 40 63", 637, "ml-px"],
  ["21 39", 36, "ml-px"],
  ["Fitness = 247", 84, ""],
  ["Filename = C:\\Users\\Alper\\Desktop\\Tez\\LabVIEWProjects\\OSSP_Project\\instances\\", 508, ""],
  ["Openshop_Instances\\brucker\\j8\\j8-per0-1.txt", 284, ""],
  ["Instance = 0", 79, ""],
];

function MainPanel() {
  return (
    <div className="absolute top-[138px] left-[97px] flex h-[791px] w-[1250px] border-t-[4px] border-r-[3px] border-b-[3px] border-l-[4px] border-t-[#d2d2d2] border-r-[#a0a0a0] border-b-[#a0a0a0] border-l-[#d4d4d4] bg-[#c0c0c0] shadow-[1px_1px_0_#6e6e6e]">
      <div className="ml-[56px] w-[242px] shrink-0 pt-[30px]">
        <div className="h-[697px] w-[231px] border-t-[4px] border-r-[3px] border-b-[3px] border-l-[4px] border-t-[#d4d4d4] border-r-[#a2a2a2] border-b-[#a2a2a2] border-l-[#d4d4d4] pl-[15px] shadow-[1px_1px_0_#6a6a6a]">
          {LEFT_CONTROLS.map((c) => <Control key={c.label} {...c} />)}
          <div className="mt-[15px] ml-px flex items-center gap-[2px]">
            <Led on />
            <T w={50}>Reorder</T>
          </div>
          <Control label="Initial Population Generation" lw={168} value="Heuristic Solution" vw={105} cls="mt-[3px] ml-[2px]" size="w-[143px] h-[19px]" />
        </div>
        <div className="mt-[8px] ml-[198px] flex h-[26px] w-[44px] items-center border-[3px] border-t-[#959595] border-r-[#cfcfcf] border-b-[#d0d0d0] border-l-[#a5a5a5] bg-[#d0d0d0] pt-px pl-[3px]">
          <T w={31}>1000</T>
        </div>
      </div>

      <div className="ml-px w-[675px] shrink-0 pt-[23px]">
        <div className="h-[19px] leading-[18px]"><T w={80}>Final Solution</T></div>
        <div className="flex h-[121px] w-[670px] border-[3px] border-t-[4px] border-b-[5px] border-t-[#929292] border-r-[#cfcfcf] border-b-[#cfcfcf] border-l-[#a0a0a0] bg-[#d3d3d3]">
          <div className="h-[112px] flex-1 overflow-hidden pt-px pl-[2px]">
            {SOLUTION.map(([s, w, c]) => (
              <div key={s} className="h-[17px] leading-[17px]"><T w={w} className={c}>{s}</T></div>
            ))}
          </div>
          <div className={`flex w-[20px] flex-col ${DITHER}`}>
            <ScrollButton dir="up" className="h-[20px]" />
            <div className={`h-[67px] ${RAISED}`} />
            <ScrollButton dir="down" className="mt-auto h-[20px]" />
          </div>
        </div>
        <div className="mt-[10px] flex h-[531px] w-[669px] flex-col border-2 border-[#d0d0d0] bg-white pt-px pl-px shadow-[inset_1px_1px_0_#5e5e5e,1px_1px_0_#5e5e5e]">
          <Gantt />
          <div className="flex">
            <Readout label="Total Tardiness" lw={91} value="247" vw={24} cls="ml-[19px] w-[170px]" size="w-[42px] h-[19px]" />
            <Readout label="Best Fitness In Population" lw={156} value="247" vw={24} cls="mt-[3px] w-[192px]" size="w-[42px] h-[19px]" />
            <Readout label="Elapsed Time (Sec)" lw={116} value="26.122" vw={44} cls="mt-[4px] w-[200px]" size="w-[60px] h-[19px]" />
            <Readout label="Makespan" lw={61} value="1040" vw={31} cls="w-[80px]" size="w-[57px] h-[19px]" />
          </div>
        </div>
        <div className="mt-[6px] ml-[12px] h-[15px] leading-[18px]"><T w={73}>Generations</T></div>
        <div className="ml-[9px] flex h-[40px] w-[666px] gap-px border-[3px] border-t-[#929292] border-r-[#d0d0d0] border-b-[#d0d0d0] border-l-[#a0a0a0] bg-[#9fb0dc]">
          {Array.from({ length: 60 }, (_, i) => (
            <div key={i} className="h-full flex-1 bg-[linear-gradient(#0038e4,#0a44f4_18%,#2a58fa_38%,#0a3cdc_58%,#062090_78%,#000a4c)]" />
          ))}
        </div>
      </div>

      <div className="ml-[9px] w-[260px] shrink-0 pt-[44px]">
        <div className="h-[660px] w-[240px] border-2 border-t-[#e6e6e6] border-r-[#606060] border-b-[#606060] border-l-[#e6e6e6] bg-[#bdbdbd] pl-[23px]">
          {RIGHT_CONTROLS.map((c) => <Control key={c.label} {...c} />)}
          <div className="mt-[16px] ml-[9px] h-[18px] leading-[18px]"><T w={66}>Auto Mode</T></div>
          <svg width="54" height="25" viewBox="0 0 54 25" className="ml-[9px] block">
            <ellipse cx="27.500" cy="14" rx="24.500" ry="10" fill="#8f8f8f" opacity=".8" />
            <ellipse cx="25" cy="11.500" rx="23.500" ry="9.500" fill="#cfcfcf" stroke="#4c4c4c" strokeWidth="1.300" />
            <path d="M4 10Q10 3.500 25 3.500T43 7" stroke="#f4f4f4" fill="none" strokeWidth="2" opacity=".8" />
            <path d="M31.500 7h6q4 1.500 6 4.500-2 3.500-6 4.500h-6z" fill="#22560c" />
          </svg>
          <Control label="Operation Selection Rule" lw={148} value="First Operation" vw={89} cls="mt-[23px] ml-[7px]" size="w-[107px] h-[18px]" />
          <Control label="Lambda" lw={49} value="0.7" vw={21} cls="mt-[24px] ml-[6px]" size="w-[82px] h-[18px]" />
        </div>
        <div className="mt-[13px] ml-[34px] h-[16px] leading-[18px]"><T w={161}>Max Allowed Time Passed?</T></div>
        <div className="ml-[33px]"><Led on={false} /></div>
      </div>
    </div>
  );
}

function Canvas() {
  return (
    <div className="relative flex-1 overflow-hidden bg-[#e2e2e2] bg-[linear-gradient(#c8c8c8_1px,transparent_1px),linear-gradient(90deg,#c8c8c8_1px,transparent_1px)] bg-[length:12px_12px] bg-[position:4px_6px]">
      <div className="absolute top-[138px] left-0 h-px w-full bg-[#b0b0b0]" />
      <MatrixNote />
      <MainPanel />
      <div className="absolute top-[180px] left-[1468px] w-[346px] overflow-hidden">
        <div className="ml-[41px] h-[20px] leading-[18px]"><T w={134}>Job Completion Times</T></div>
        <ArrayControl cells={["1038", "1024", "1040", "1009", "1035", "1037"]} cls="pt-[2px]" />
      </div>
      <div className="absolute top-[261px] left-[1474px] w-[340px] overflow-hidden">
        <div className="ml-[38px] h-[24px] leading-[18px]"><T w={65}>Due Dates</T></div>
        <ArrayControl cells={["1000", "1000", "1000", "1000", "1000", "1000"]} cls="pt-[2px]" />
      </div>
      <div className="absolute top-[540px] left-[1529px] flex w-[285px] flex-col overflow-hidden leading-[17px]">
        <div className="flex"><T w={277}>Best Sequence = 41 42 6 33 43 16 38 36 18</T><T> 4</T></div>
        <div className="flex"><T w={84}>Fitness = 223</T></div>
        <div className="flex"><T w={286}>{"Filename = C:\\Users\\Alper\\Desktop\\Tez\\LabVIE"}</T></div>
        <div className="flex"><T w={79}>Instance = 0</T></div>
      </div>
    </div>
  );
}

export default function App() {
  return (
    <div className='flex h-[1080px] w-[1920px] overflow-hidden bg-[#d4d0c8] font-["DejaVu_Sans_Condensed","Noto_Sans",sans-serif] text-[14px] leading-[17px] text-black'>
      <div className="flex min-w-0 flex-1 flex-col">
        <div className="flex h-[24px] shrink-0 items-center bg-[linear-gradient(90deg,#0a246a,#a6caf0)] pr-[5px] pl-[4px] text-white">
          <LvIcon size={19} />
          <T w={420} className="ml-[4px] text-[16px]">Top_Level.vi Front Panel on OSSP_GA.lvproj/My Computer *</T>
          <div className="ml-auto flex text-black">
            <div className={`flex h-[20px] w-[21px] items-end pb-[3px] pl-[4px] ${RAISED}`}><div className="h-[2px] w-[8px] bg-black" /></div>
            <div className={`flex h-[20px] w-[21px] items-center justify-center ${RAISED}`}>
              <svg width="12" height="12" viewBox="0 0 12 12" fill="none" stroke="#000"><path d="M3.500 4V1.500h8v6H9M3.500 2h8" /><rect x=".5" y="5.500" width="8" height="5.500" /><path d="M.5 6h8" /></svg>
            </div>
            <div className={`ml-[2px] flex h-[20px] w-[21px] items-center justify-center ${RAISED}`}>
              <svg width="12" height="12" viewBox="0 0 12 12"><path d="M.8.8l10.400 10.400M11.200.8L.8 11.200" stroke="#000" strokeWidth="1.700" /></svg>
            </div>
          </div>
        </div>
        <div className="flex min-h-0 flex-1">
          <div className="mt-[2px] flex min-w-0 flex-1 flex-col border-t border-l-2 border-[#505050]">
            <div className="relative shrink-0">
              <div className="flex h-[25px] items-center pl-[7px]">
                {MENU.map(([m, w, c]) => <T key={m} w={w} className={c}>{m}</T>)}
              </div>
              <div className="h-[2px] border-t border-b border-t-[#808080] border-b-white" />
              <ToolBar />
              <div className="absolute top-[9px] right-[2px]"><ConnectorPane /></div>
            </div>
            <div className="flex min-h-0 flex-1 border-t border-[#606060]">
              <Canvas />
              <div className={`flex w-[20px] shrink-0 flex-col pt-px ${DITHER}`}>
                <ScrollButton dir="up" className="h-[19px]" />
                <div className={`mt-[152px] h-[657px] ${RAISED}`} />
                <ScrollButton dir="down" className="mt-auto h-[20px]" />
              </div>
            </div>
          </div>
          <div className="w-[4px] shrink-0 border-l border-[#606060]" />
        </div>
        <div className="flex h-[22px] shrink-0 pb-[2px]">
          <div className="flex w-[195px] shrink-0 items-center border border-black pl-[3px]"><T w={187}>OSSP_GA.lvproj/My Computer</T></div>
          <ScrollButton dir="left" className="w-[20px]" />
          <div className={`flex flex-1 ${DITHER}`}>
            <div className={`ml-[168px] w-[856px] ${RAISED}`} />
          </div>
          <ScrollButton dir="right" className="w-[20px]" />
          <div className="w-[24px] shrink-0" />
        </div>
      </div>
      <TaskBar />
    </div>
  );
}
